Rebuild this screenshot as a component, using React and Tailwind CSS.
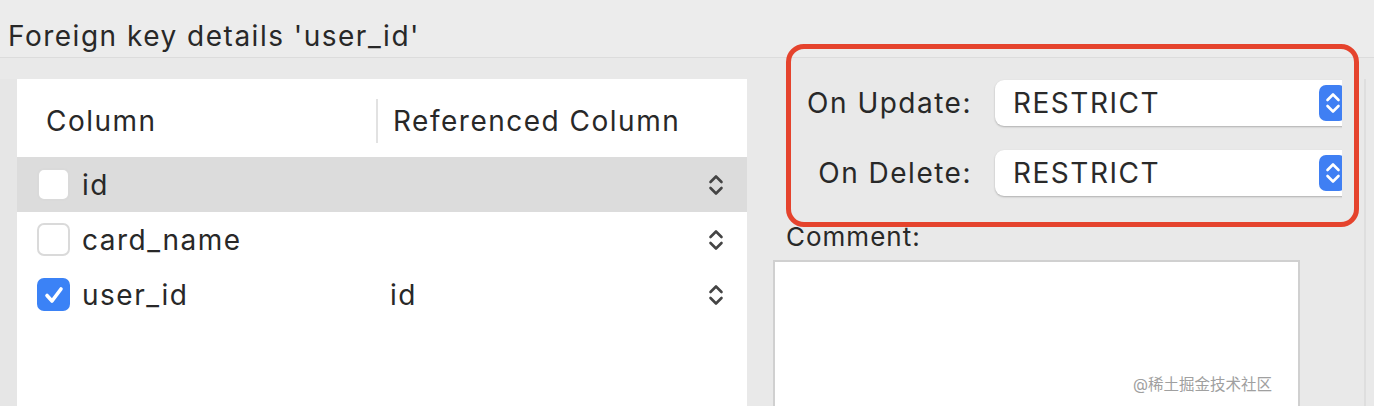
import { useState } from "react";

const rows = [
    { name: "id", ref: "", checked: false, selected: true },
    { name: "card_name", ref: "", checked: false, selected: false },
    { name: "user_id", ref: "id", checked: true, selected: false },
];

const Chevrons = ({ className = "" }) => (
    <svg width="18" height="26" viewBox="0 0 18 26" className={className}>
        <path d="M3.5 10 L9 4.5 L14.5 10" fill="none" stroke="currentColor" strokeWidth="2.6" strokeLinecap="round" strokeLinejoin="round" />
        <path d="M3.5 16 L9 21.5 L14.5 16" fill="none" stroke="currentColor" strokeWidth="2.6" strokeLinecap="round" strokeLinejoin="round" />
    </svg>
);

const Checkbox = ({ checked }) =>
    checked ? (
        <div className="w-[33px] h-[33px] rounded-[7px] bg-[#3b82f6] flex items-center justify-center shrink-0">
            <svg width="24" height="24" viewBox="0 0 24 24">
                <path d="M5 12.5 L10 18 L19 6" fill="none" stroke="white" strokeWidth="3.6" strokeLinecap="round" strokeLinejoin="round" />
            </svg>
        </div>
    ) : (
        <div className="w-[33px] h-[33px] rounded-[7px] bg-white border-2 border-[#dadada] shrink-0" />
    );

const Select = ({ value }) => (
    <div className="h-[46px] w-[362px] shrink-0 rounded-[9px] bg-white shadow-[0_1px_2px_rgba(0,0,0,0.25)] flex items-center pl-[18px] relative">
        <span className="text-[28px] text-[#2a2a2a]">{value}</span>
        <div className="absolute right-[11px] top-[5px] w-[27px] h-[36px] rounded-[7px] bg-[#3f7ff3] flex items-center justify-center text-white">
            <Chevrons />
        </div>
    </div>
);

const App = () => {
    const [checks] = useState(rows);

    return (
        <div
            className="relative h-[406px] w-[1374px] overflow-hidden bg-[#e9e9e9] text-[#282828] tracking-[1.5px]"
            style={{ fontFamily: 'Inter, "Noto Sans CJK SC", sans-serif' }}
        >
            <div className="h-[58px] bg-[#ececec] border-b border-[#dcdcdc] flex items-end pl-[8px] pb-[7px]">
                <span className="text-[28px] leading-none">Foreign key details 'user_id'</span>
            </div>

            <div className="flex pt-[21px] h-[348px]">
                <div className="w-[17px] shrink-0 bg-[#e6e6e6]" />

                {/* column table */}
                <div className="w-[730px] shrink-0 bg-white flex flex-col">
                    <div className="h-[78px] flex items-center pt-[5px]">
                        <div className="w-[359px] pl-[29px] text-[28px]">Column</div>
                        <div className="w-[2px] h-[44px] bg-[#e2e2e2]" />
                        <div className="pl-[15px] text-[28px]">Referenced Column</div>
                    </div>
                    {checks.map((r) => (
                        <div
                            key={r.name}
                            className={`h-[55px] flex items-center ${r.selected ? "bg-[#dcdcdc]" : ""}`}
                        >
                            <div className="w-[373px] flex items-center gap-[12px] pl-[20px]">
                                <Checkbox checked={r.checked} />
                                <span className="text-[28px]">{r.name}</span>
                            </div>
                            <div className="flex-1 text-[28px]">{r.ref}</div>
                            <Chevrons className="mr-[22px] text-[#444]" />
                        </div>
                    ))}
                </div>

                <div className="w-[26px] shrink-0" />

                {/* right form */}
                <div className="w-[569px] shrink-0 overflow-hidden flex flex-col -mt-[1px]">
                    <div className="flex flex-col gap-[24px] pt-[2px]">
                        <div className="flex items-center">
                            <div className="w-[222px] shrink-0 text-right text-[28px] pr-[23px]">On Update:</div>
                            <Select value="RESTRICT" />
                        </div>
                        <div className="flex items-center">
                            <div className="w-[222px] shrink-0 text-right text-[28px] pr-[23px]">On Delete:</div>
                            <Select value="RESTRICT" />
                        </div>
                    </div>
                    <div className="pl-[13px] pt-[28px] text-[26px] leading-none tracking-[1px]">Comment:</div>
                    <div className="mt-[10px] w-[527px] flex-1 bg-white border-2 border-[#d0d0d0] border-b-0" />
                </div>

                <div className="flex-1 border-l-2 border-[#dedede] ml-[22px]" />
            </div>

            {/* annotation */}
            <div className="absolute left-[786px] top-[44px] w-[573px] h-[183px] rounded-[18px] border-[5px] border-[#e5432d] pointer-events-none" />

            <div className="absolute left-[1133px] top-[373px] text-[15.5px] tracking-normal text-[#a0a0a0]">@稀土掘金技术社区</div>
        </div>
    );
};

export default App;
